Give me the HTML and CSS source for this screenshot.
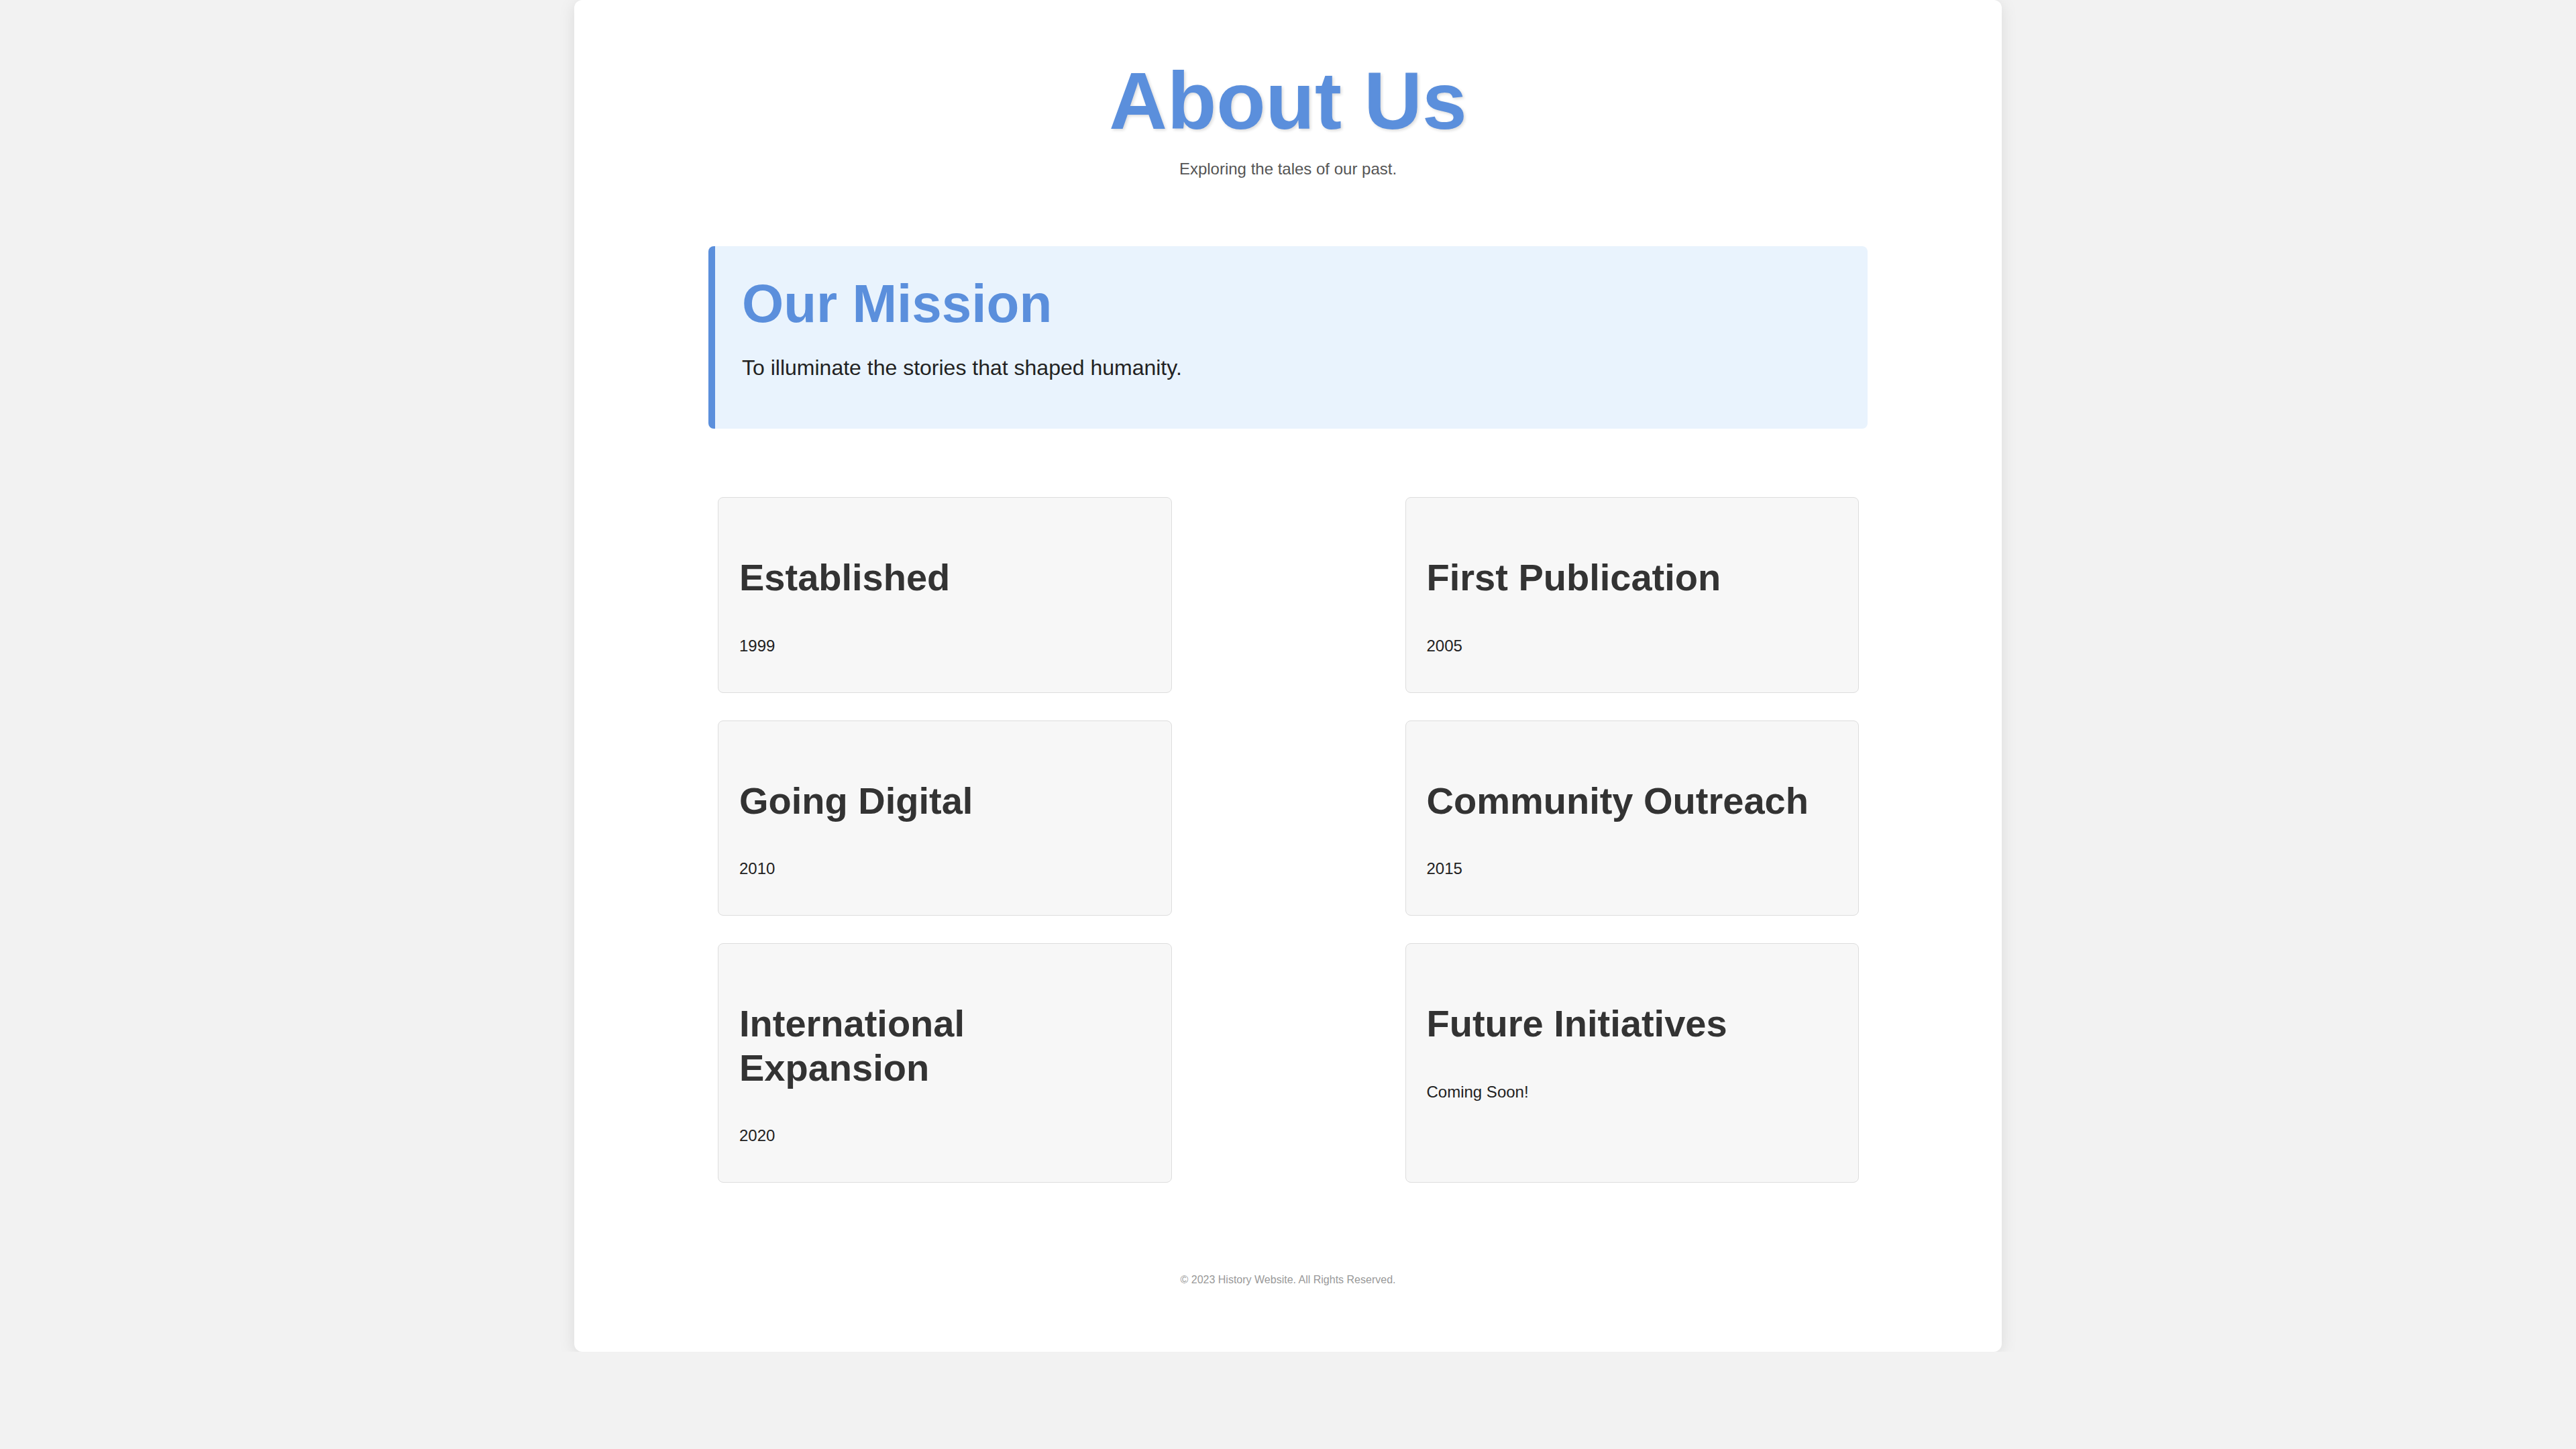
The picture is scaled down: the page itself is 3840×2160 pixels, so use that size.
FILE: index.html
```html
<!DOCTYPE html>
<html lang="en">
<head>
<meta charset="utf-8">
<title>About Us</title>
<link rel="stylesheet" href="styles.css">
</head>
<body>
<div class="container">
  <header class="page-header">
    <h1 class="title">About Us</h1>
    <p class="subtitle">Exploring the tales of our past.</p>
  </header>
  <section class="mission">
    <h2 class="mission-title">Our Mission</h2>
    <p class="mission-text">To illuminate the stories that shaped humanity.</p>
  </section>
  <section class="timeline">
    <div class="card"><h3 class="card-title">Established</h3><p class="card-year">1999</p></div>
    <div class="card"><h3 class="card-title">First Publication</h3><p class="card-year">2005</p></div>
    <div class="card"><h3 class="card-title">Going Digital</h3><p class="card-year">2010</p></div>
    <div class="card"><h3 class="card-title">Community Outreach</h3><p class="card-year">2015</p></div>
    <div class="card"><h3 class="card-title">International Expansion</h3><p class="card-year">2020</p></div>
    <div class="card"><h3 class="card-title">Future Initiatives</h3><p class="card-year">Coming Soon!</p></div>
  </section>
  <footer class="footer">© 2023 History Website. All Rights Reserved.</footer>
</div>
</body>
</html>
```

FILE: styles.css
```css
html, body {
  margin: 0;
  padding: 0;
}
body {
  background: #f2f2f2;
  font-family: "Liberation Sans", Arial, sans-serif;
  color: #333;
}
.container {
  width: 2128px;
  box-sizing: border-box;
  margin: 0 auto;
  background: #ffffff;
  border-radius: 12px;
  box-shadow: 0 4px 24px rgba(0, 0, 0, 0.1);
  padding: 81px 200px 98px;
}
.page-header {
  text-align: center;
}
.title {
  margin: 0;
  font-size: 120px;
  font-weight: bold;
  line-height: normal;
  color: #5b8fdc;
  text-shadow: 2px 2px 4px rgba(0, 0, 0, 0.15);
}
.subtitle {
  margin: 19px 0 0;
  font-size: 24px;
  color: #555;
}
.mission {
  margin-top: 101px;
  background: #e9f3fd;
  border-left: 10px solid #5b8fdc;
  border-radius: 8px;
  padding: 40px 40px 40px;
}
.mission-title {
  margin: 0 0 31px;
  font-size: 80px;
  font-weight: bold;
  line-height: normal;
  color: #5b8fdc;
}
.mission-text {
  margin: 0 0 32px;
  font-size: 32px;
  color: #222;
}
.timeline {
  margin-top: 102px;
  display: grid;
  grid-template-columns: 1fr 1fr;
  column-gap: 348px;
  row-gap: 41px;
  padding: 0 13px 0 14px;
}
.card {
  background: #f7f7f7;
  border: 1px solid #dddddd;
  border-radius: 8px;
  padding: 86px 28px 55px 31px;
}
.card-title {
  margin: 0;
  font-size: 56px;
  font-weight: bold;
  line-height: 1.17;
  color: #333;
}
.card-year {
  margin: 55px 0 0;
  font-size: 24px;
  color: #222;
}
.footer {
  margin-top: 136px;
  text-align: center;
  font-size: 16px;
  color: #999;
}
```
